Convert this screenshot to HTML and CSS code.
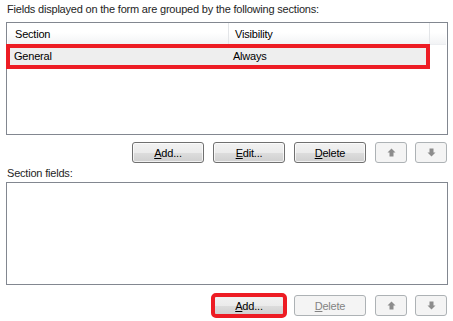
FILE: index.html
```html
<!DOCTYPE html>
<html lang="en">
<head>
    <meta charset="UTF-8">
    <title>Sections</title>
    <link rel="stylesheet" href="styles.css">
</head>
<body>
    <div class="panel">
        <div class="caption first">Fields displayed on the form are grouped by the following sections:</div>

        <!-- Sections grid -->
        <div class="listbox sections">
            <div class="grid-head">
                <span class="col-section">Section</span>
                <span class="col-visibility">Visibility</span>
                <span class="col-rest"></span>
            </div>
            <div class="grid-row selected marked">
                <span class="col-section">General</span>
                <span class="col-visibility">Always</span>
            </div>
        </div>

        <div class="btn-row">
            <button class="btn"><u>A</u>dd...</button>
            <button class="btn"><u>E</u>dit...</button>
            <button class="btn"><u>D</u>elete</button>
            <button class="btn arrow up" disabled>
                <svg width="9" height="9" viewBox="0 0 9 9"><path d="M4.5 0.5 L8.5 4.5 L6.5 4.5 L6.5 8.5 L2.5 8.5 L2.5 4.5 L0.5 4.5 Z" fill="#8c8c8c"/></svg>
            </button>
            <button class="btn arrow down" disabled>
                <svg width="9" height="9" viewBox="0 0 9 9"><path d="M4.5 8.5 L8.5 4.5 L6.5 4.5 L6.5 0.5 L2.5 0.5 L2.5 4.5 L0.5 4.5 Z" fill="#8c8c8c"/></svg>
            </button>
        </div>

        <div class="caption">Section fields:</div>

        <!-- Fields list -->
        <div class="listbox fields"></div>

        <div class="btn-row last">
            <button class="btn marked"><u>A</u>dd...</button>
            <button class="btn" disabled><u>D</u>elete</button>
            <button class="btn arrow up" disabled>
                <svg width="9" height="9" viewBox="0 0 9 9"><path d="M4.5 0.5 L8.5 4.5 L6.5 4.5 L6.5 8.5 L2.5 8.5 L2.5 4.5 L0.5 4.5 Z" fill="#8c8c8c"/></svg>
            </button>
            <button class="btn arrow down" disabled>
                <svg width="9" height="9" viewBox="0 0 9 9"><path d="M4.5 8.5 L8.5 4.5 L6.5 4.5 L6.5 0.5 L2.5 0.5 L2.5 4.5 L0.5 4.5 Z" fill="#8c8c8c"/></svg>
            </button>
        </div>
    </div>
</body>
</html>
```

FILE: styles.css
```css
* {
    margin: 0;
    padding: 0;
    box-sizing: border-box;
}

body {
    font-family: "Liberation Sans", Arial, sans-serif;
    font-size: 11px;
    letter-spacing: -0.2px;
    color: #000;
    background-color: #fff;
    width: 453px;
    height: 321px;
    overflow: hidden;
}

.panel {
    display: flex;
    flex-direction: column;
    padding: 0 5px 0 6px;
}

.caption {
    height: 19px;
    line-height: 20px;
    padding-left: 1px;
    color: #1e1e1e;
}

.caption.first {
    height: 22px;
    line-height: 18px;
}

/* === LIST BOXES === */
.listbox {
    border: 1px solid #828790;
    background-color: #fff;
}

.listbox.sections {
    height: 113px;
    padding: 0 1px;
}

.listbox.fields {
    height: 103px;
}

.grid-head {
    display: flex;
    height: 22px;
    background: linear-gradient(to bottom, #ffffff 0%, #ffffff 45%, #f2f3f5 100%);
    border-bottom: 1px solid #eceef1;
}

.grid-head span {
    line-height: 23px;
    border-right: 1px solid #e3e5e8;
}

.col-section {
    width: 221px;
    padding-left: 7px;
}

.col-visibility {
    width: 201px;
    padding-left: 6px;
}

.grid-head .col-rest {
    flex: 1;
    border-right: none;
}

.grid-row {
    display: flex;
    height: 20px;
    line-height: 21px;
    margin-top: 1px;
}

.grid-row.selected {
    width: 416px;
    margin-left: 2px;
    background-color: #eeeeee;
}

.grid-row .col-section {
    width: 219px;
    padding-left: 4px;
}

/* Red annotation frame */
.marked {
    position: relative;
}

.grid-row.marked::after {
    content: "";
    position: absolute;
    top: -2px;
    left: -4px;
    right: -4px;
    bottom: -3px;
    border: 4px solid #ed1c24;
}

/* === BUTTONS === */
.btn-row {
    display: flex;
    justify-content: flex-end;
    gap: 9px;
    margin-top: 7px;
    padding-right: 1px;
}

.btn-row.last {
    margin-top: 10px;
}

.btn {
    width: 72px;
    height: 21px;
    font-family: inherit;
    font-size: 11px;
    letter-spacing: -0.2px;
    color: #000;
    border: 1px solid #707070;
    border-radius: 3px;
    background: linear-gradient(to bottom, #f2f2f2 0%, #ebebeb 50%, #dddddd 51%, #cfcfcf 100%);
    box-shadow: inset 0 0 0 1px rgba(255, 255, 255, 0.7);
}

.btn:disabled {
    color: #838383;
    border-color: #adb2b5;
    background: #f4f4f4;
    box-shadow: none;
}

.btn.arrow {
    width: 32px;
    display: flex;
    align-items: center;
    justify-content: center;
}

.btn.arrow.down {
    margin-left: -1px;
}

.btn.marked {
    outline: 4px solid #ed1c24;
    outline-offset: -2px;
}
```
